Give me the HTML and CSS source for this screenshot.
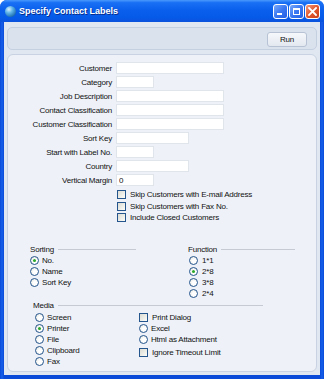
FILE: index.html
```html
<!DOCTYPE html>
<html lang="en">
<head>
    <meta charset="UTF-8">
    <title>Specify Contact Labels</title>
    <link rel="stylesheet" href="styles.css">
</head>
<body>
<div class="window">
    <div class="titlebar">
        <span class="app-icon"></span>
        <span class="title">Specify Contact Labels</span>
        <div class="controls">
            <span class="ctl min"><span class="min-bar"></span></span>
            <span class="ctl max"><span class="max-box"></span></span>
            <span class="ctl close">
                <svg width="9" height="9" viewBox="0 0 9 9"><path d="M1 1L8 8M8 1L1 8" stroke="#fff" stroke-width="1.8" stroke-linecap="square"/></svg>
            </span>
        </div>
    </div>

    <div class="client">
        <div class="toolbar">
            <button class="run">Run</button>
        </div>

        <div class="panel">
            <div class="fields">
                <label>Customer</label><input class="w-long">
                <label>Category</label><input class="w-short">
                <label>Job Description</label><input class="w-long">
                <label>Contact Classification</label><input class="w-long">
                <label>Customer Classification</label><input class="w-long">
                <label>Sort Key</label><input class="w-mid">
                <label>Start with Label No.</label><input class="w-short">
                <label>Country</label><input class="w-mid">
                <label>Vertical Margin</label><input class="w-short" value="0">
            </div>

            <div class="checks">
                <div class="opt"><span class="box"></span>Skip Customers with E-mail Address</div>
                <div class="opt"><span class="box"></span>Skip Customers with Fax No.</div>
                <div class="opt"><span class="box"></span>Include Closed Customers</div>
            </div>

            <div class="groups">
                <div class="group sorting">
                    <div class="group-head"><span>Sorting</span><span class="rule"></span></div>
                    <div class="opt"><span class="radio on"></span>No.</div>
                    <div class="opt"><span class="radio"></span>Name</div>
                    <div class="opt"><span class="radio"></span>Sort Key</div>
                </div>
                <div class="group function">
                    <div class="group-head"><span>Function</span><span class="rule"></span></div>
                    <div class="opt"><span class="radio"></span>1*1</div>
                    <div class="opt"><span class="radio on"></span>2*8</div>
                    <div class="opt"><span class="radio"></span>3*8</div>
                    <div class="opt"><span class="radio"></span>2*4</div>
                </div>
            </div>

            <div class="group media">
                <div class="group-head"><span>Media</span><span class="rule"></span></div>
                <div class="media-cols">
                    <div class="col">
                        <div class="opt"><span class="radio"></span>Screen</div>
                        <div class="opt"><span class="radio on"></span>Printer</div>
                        <div class="opt"><span class="radio"></span>File</div>
                        <div class="opt"><span class="radio"></span>Clipboard</div>
                        <div class="opt"><span class="radio"></span>Fax</div>
                    </div>
                    <div class="col">
                        <div class="opt"><span class="box"></span>Print Dialog</div>
                        <div class="opt"><span class="radio"></span>Excel</div>
                        <div class="opt"><span class="radio"></span>Html as Attachment</div>
                        <div class="opt gap"><span class="box"></span>Ignore Timeout Limit</div>
                    </div>
                </div>
            </div>
        </div>
    </div>
</div>
</body>
</html>
```

FILE: styles.css
```css
body { margin: 0; font-family: "Liberation Sans", Arial, sans-serif; font-size: 8px; letter-spacing: -0.2px; color: #111; }

.window { width: 324px; height: 379px; box-sizing: border-box; display: flex; flex-direction: column; background: linear-gradient(90deg, #0a4ad8, #1660ea 2px, #0a4ad8 4px, #0a4ad8 320px, #1660ea 322px, #0a4ad8); border-radius: 7px 7px 0 0; overflow: hidden; }

/* title bar */
.titlebar { height: 22px; flex: none; display: flex; align-items: center; background: linear-gradient(#4a9afc 0%, #1a70f4 12%, #0a60ec 45%, #065ae8 80%, #0a52dc 100%); }
.app-icon { width: 11px; height: 11px; margin: 0 3px 0 5px; border-radius: 50%; background: radial-gradient(circle at 35% 30%, #d8f0ff 0%, #5fb4e8 35%, #1f6fb0 75%, #15508a 100%); }
.title { color: #fff; font-weight: bold; font-size: 9px; letter-spacing: 0; text-shadow: 1px 1px 0 #0a2d8c; }
.controls { margin-left: auto; margin-right: 4px; display: flex; gap: 1px; }
.ctl { width: 15px; height: 15px; box-sizing: border-box; border: 1px solid #fff; border-radius: 3px; background: linear-gradient(135deg, #7aaafa 0%, #3a78f2 50%, #2260e4 100%); position: relative; display: flex; align-items: center; justify-content: center; }
.ctl.close { background: linear-gradient(135deg, #f29a7c 0%, #e2582e 50%, #c8401a 100%); }
.min-bar { position: absolute; left: 3px; bottom: 3px; width: 5px; height: 2px; background: #fff; }
.max-box { width: 7px; height: 7px; box-sizing: border-box; border: 1px solid #fff; border-top-width: 2px; }

/* client area */
.client { flex: 1; margin: 0 4px 4px; background: #e1e7f1; padding: 5px 3px 3px; display: flex; flex-direction: column; }
.toolbar { height: 23px; box-sizing: border-box; border: 1px solid #c4cfe0; border-radius: 5px; background: #dae2ee; display: flex; justify-content: flex-end; align-items: flex-start; padding: 4px 9px 0 0; }
.run { width: 40px; height: 15px; padding: 0; font-family: inherit; font-size: 8px; letter-spacing: -0.2px; color: #111; border: 1px solid #b7c2d4; border-radius: 3px; background: linear-gradient(#f6f8fb, #e3e8f0); }

.panel { flex: 1; margin-top: 4px; border: 1px solid #c8d2e2; border-radius: 6px; background: #eef2f8; padding-top: 7px; }

/* label + input grid */
.fields { display: grid; grid-template-columns: 104px auto; column-gap: 4px; row-gap: 2px; grid-auto-rows: 12px; align-items: center; justify-items: start; }
.fields label { justify-self: end; white-space: nowrap; }
.fields input { height: 12px; box-sizing: border-box; border: 1px solid #e0e5ec; background: #fff; padding: 0 2px; font-family: inherit; font-size: 8px; color: #111; outline: none; margin: 0; }
.w-long { width: 108px; }
.w-mid { width: 73px; }
.w-short { width: 38px; }

/* check and radio rows */
.opt { height: 11px; display: flex; align-items: center; white-space: nowrap; }
.checks { margin: 3px 0 0 109px; }
.checks .opt { height: 11.5px; }
.box { width: 9px; height: 9px; box-sizing: border-box; border: 1px solid #24558c; background: linear-gradient(135deg, #dcdcd4, #fbfbf9); margin-right: 4px; flex: none; }
.radio { width: 9px; height: 9px; box-sizing: border-box; border: 1px solid #24558c; border-radius: 50%; background: radial-gradient(circle at 60% 60%, #fff 30%, #e2e2dc 100%); margin-right: 3px; flex: none; display: flex; align-items: center; justify-content: center; }
.radio.on::after { content: ""; width: 3px; height: 3px; border-radius: 50%; background: #2ba82b; }

/* option groups */
.groups { display: flex; margin-top: 21px; }
.group-head { height: 10px; display: flex; align-items: center; }
.rule { flex: 1; height: 1px; background: #c6cad2; margin-left: 4px; }
.sorting { margin-left: 22px; width: 106px; }
.function { margin-left: 52px; width: 107px; }
.function .opt { padding-left: 1px; }
.function .radio { margin-right: 4px; }
.media { margin: 2px 0 0 25px; width: 230px; }
.media-cols { display: flex; padding-top: 1px; }
.media-cols .col:first-child { width: 104px; padding-left: 2px; }
.opt.gap { margin-top: 2px; }
```
